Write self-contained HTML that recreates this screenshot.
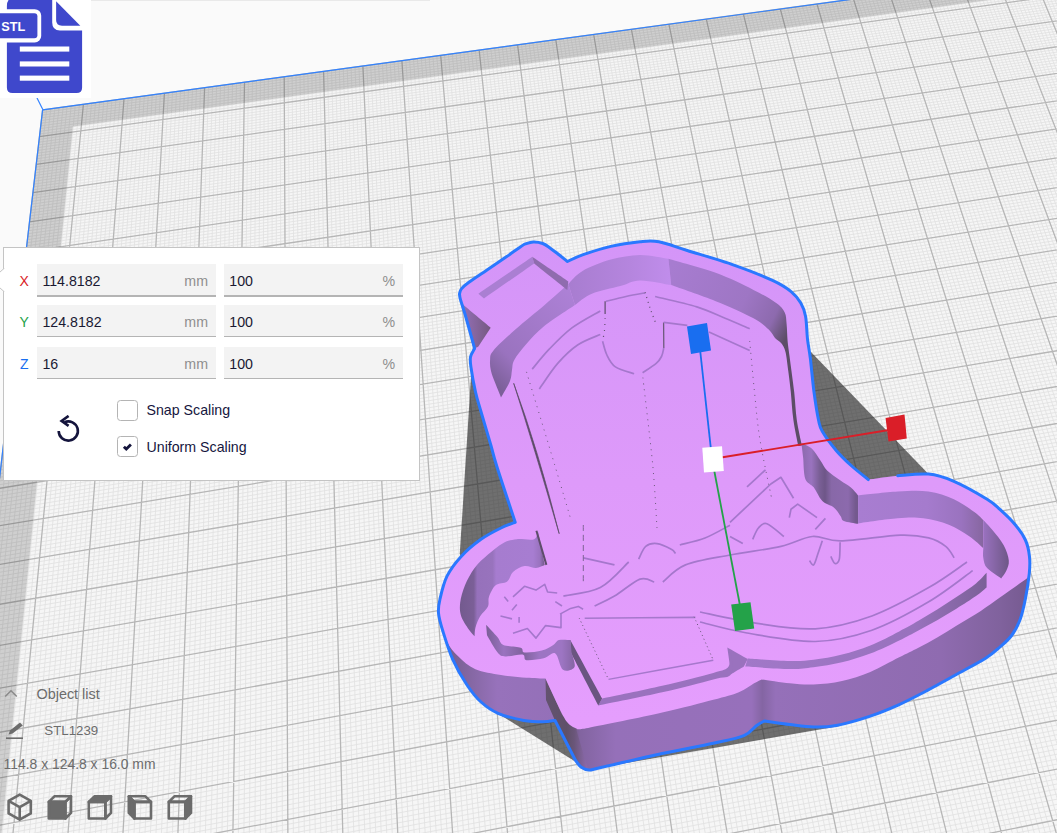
<!DOCTYPE html>
<html><head><meta charset="utf-8"><title>STL1239</title>
<style>
html,body{margin:0;padding:0}
body{width:1057px;height:833px;position:relative;overflow:hidden;background:#fafafa;font-family:"Liberation Sans","DejaVu Sans",sans-serif}
.abs{position:absolute}
#topline{left:91px;top:0;width:339px;height:1px;background:#e9e9e9}
#iconbox{left:0;top:0;width:91px;height:98px;background:#fff;overflow:hidden}
#panel{left:3px;top:247px;width:415px;height:232px;background:#fff;border:1px solid #c4c4c4;}
.lbl{position:absolute;left:13.2px;width:14px;text-align:center;font-size:14px;line-height:16px}
.fld{position:absolute;height:30.6px;background:#f3f3f3;border-bottom:2.3px solid #b4b4b4;font-size:14.2px;color:#191932;box-sizing:content-box}
.fld span.v{position:absolute;left:5.4px;top:8.6px;line-height:16px}
.fld span.u{position:absolute;right:8px;top:8.6px;line-height:16px;color:#8e8e8e}
.cb{position:absolute;left:113px;width:19px;height:19px;border:1px solid #b4b4b4;border-radius:3.5px;background:#fff}
.cbl{position:absolute;left:142.5px;font-size:14.2px;color:#16163e;line-height:18px;white-space:nowrap}
.gtxt{color:#6c6c6c;white-space:nowrap}

</style></head><body>
<svg width="1057" height="833" viewBox="0 0 1057 833" style="position:absolute;left:0;top:0">
<polygon points="42.6,109.8 1242.3,-54.1 1863.7,1115.4 -130.5,1590.5" fill="#f6f6f6"/>
<path d="M46.7 109.3L-74.4 1163.9M42.3 112.5L1104.6 -32.9M50.8 108.7L-68.1 1162.6M42 115.1L1105.6 -30.6M54.9 108.2L-61.8 1161.3M41.7 117.8L1106.6 -28.3M59 107.6L-55.5 1159.9M41.4 120.5L1107.6 -26M63.1 107L-49.2 1158.6M41 123.2L1108.7 -23.7M67.1 106.5L-42.9 1157.3M40.7 125.9L1109.7 -21.4M71.2 105.9L-36.6 1156M40.4 128.6L1110.8 -19.1M75.3 105.4L-30.3 1154.7M40.1 131.3L1111.8 -16.8M79.4 104.8L-24 1153.4M39.8 134L1112.9 -14.5M87.5 103.7L-11.5 1150.7M39.1 139.4L1115 -9.8M91.6 103.1L-5.2 1149.4M38.8 142.2L1116 -7.5M95.6 102.6L1 1148.1M38.5 144.9L1117.1 -5.1M99.7 102L7.3 1146.8M38.2 147.6L1118.1 -2.8M103.8 101.5L13.5 1145.5M37.9 150.4L1119.2 -0.4M107.8 100.9L19.8 1144.2M37.5 153.2L1120.2 1.9M111.9 100.4L26 1142.9M37.2 155.9L1121.3 4.3M115.9 99.8L32.2 1141.6M36.9 158.7L1122.4 6.7M120 99.3L38.5 1140.3M36.6 161.5L1123.5 9.1M128.1 98.2L50.9 1137.7M35.9 167.1L1125.6 13.8M132.1 97.6L57.1 1136.4M35.6 169.9L1126.7 16.2M136.2 97L63.3 1135.1M35.3 172.7L1127.8 18.6M140.2 96.5L69.5 1133.8M34.9 175.5L1128.9 21.1M144.3 95.9L75.7 1132.5M34.6 178.4L1129.9 23.5M148.3 95.4L81.9 1131.2M34.3 181.2L1131 25.9M152.3 94.8L88.1 1129.9M33.9 184.1L1132.1 28.3M156.4 94.3L94.2 1128.6M33.6 186.9L1133.2 30.8M160.4 93.7L100.4 1127.3M33.3 189.8L1134.3 33.2M168.4 92.6L112.7 1124.7M32.6 195.5L1136.5 38.1M172.5 92.1L118.9 1123.4M32.2 198.4L1137.6 40.6M176.5 91.5L125 1122.2M31.9 201.3L1138.8 43M180.5 91L131.2 1120.9M31.6 204.2L1139.9 45.5M184.5 90.4L137.3 1119.6M31.2 207.1L1141 48M188.5 89.9L143.5 1118.3M30.9 210.1L1142.1 50.5M192.5 89.3L149.6 1117M30.5 213L1143.2 53M196.5 88.8L155.7 1115.7M30.2 215.9L1144.4 55.5M200.6 88.2L161.8 1114.5M29.9 218.9L1145.5 58M208.6 87.2L174.1 1111.9M29.2 224.8L1147.8 63M212.6 86.6L180.2 1110.6M28.8 227.8L1148.9 65.5M216.6 86.1L186.3 1109.3M28.5 230.7L1150 68M220.5 85.5L192.3 1108.1M28.1 233.7L1151.2 70.6M224.5 85L198.4 1106.8M27.8 236.7L1152.3 73.1M228.5 84.4L204.5 1105.5M27.4 239.7L1153.5 75.7M232.5 83.9L210.6 1104.2M27.1 242.7L1154.6 78.2M236.5 83.3L216.7 1103M26.7 245.8L1155.8 80.8M240.5 82.8L222.7 1101.7M26.4 248.8L1156.9 83.4M248.4 81.7L234.8 1099.2M25.6 254.9L1159.3 88.5M252.4 81.2L240.9 1097.9M25.3 257.9L1160.4 91.1M256.4 80.6L246.9 1096.6M24.9 261L1161.6 93.7M260.4 80.1L253 1095.4M24.6 264.1L1162.8 96.3M264.3 79.5L259 1094.1M24.2 267.1L1163.9 98.9M268.3 79L265 1092.8M23.9 270.2L1165.1 101.6M272.3 78.4L271.1 1091.6M23.5 273.3L1166.3 104.2M276.2 77.9L277.1 1090.3M23.1 276.4L1167.5 106.8M280.2 77.4L283.1 1089.1M22.8 279.6L1168.7 109.5M288.1 76.3L295.1 1086.6M22 285.8L1171.1 114.8M292.1 75.7L301.1 1085.3M21.7 289L1172.3 117.4M296 75.2L307.1 1084M21.3 292.1L1173.5 120.1M300 74.7L313.1 1082.8M20.9 295.3L1174.7 122.8M303.9 74.1L319 1081.5M20.6 298.5L1175.9 125.5M307.9 73.6L325 1080.3M20.2 301.6L1177.1 128.1M311.8 73L331 1079M19.8 304.8L1178.3 130.8M315.7 72.5L337 1077.8M19.4 308L1179.5 133.6M319.7 72L342.9 1076.5M19.1 311.2L1180.8 136.3M327.5 70.9L354.8 1074.1M18.3 317.7L1183.2 141.7M331.5 70.4L360.8 1072.8M17.9 320.9L1184.4 144.4M335.4 69.8L366.7 1071.6M17.5 324.2L1185.7 147.2M339.3 69.3L372.7 1070.3M17.2 327.4L1186.9 149.9M343.3 68.7L378.6 1069.1M16.8 330.7L1188.2 152.7M347.2 68.2L384.5 1067.8M16.4 334L1189.4 155.5M351.1 67.7L390.4 1066.6M16 337.3L1190.7 158.2M355 67.1L396.3 1065.4M15.6 340.6L1191.9 161M358.9 66.6L402.3 1064.1M15.2 343.9L1193.2 163.8M366.8 65.5L414.1 1061.7M14.5 350.5L1195.7 169.4M370.7 65L420 1060.4M14.1 353.9L1197 172.2M374.6 64.5L425.8 1059.2M13.7 357.2L1198.2 175M378.5 63.9L431.7 1058M13.3 360.6L1199.5 177.8M382.4 63.4L437.6 1056.7M12.9 363.9L1200.8 180.7M386.3 62.9L443.5 1055.5M12.5 367.3L1202 183.5M390.2 62.3L449.4 1054.3M12.1 370.7L1203.3 186.4M394.1 61.8L455.2 1053M11.7 374.1L1204.6 189.2M398 61.3L461.1 1051.8M11.3 377.5L1205.9 192.1M405.8 60.2L472.8 1049.4M10.5 384.3L1208.5 197.8M409.6 59.7L478.6 1048.1M10.1 387.8L1209.8 200.7M413.5 59.1L484.5 1046.9M9.7 391.2L1211.1 203.6M417.4 58.6L490.3 1045.7M9.3 394.7L1212.4 206.5M421.3 58.1L496.1 1044.5M8.9 398.2L1213.7 209.4M425.2 57.6L502 1043.3M8.5 401.6L1215 212.4M429.1 57L507.8 1042M8.1 405.1L1216.4 215.3M432.9 56.5L513.6 1040.8M7.7 408.6L1217.7 218.2M436.8 56L519.4 1039.6M7.3 412.2L1219 221.2M444.5 54.9L531 1037.2M6.4 419.2L1221.7 227.1M448.4 54.4L536.8 1036M6 422.8L1223 230.1M452.3 53.8L542.6 1034.7M5.6 426.3L1224.4 233M456.1 53.3L548.4 1033.5M5.2 429.9L1225.7 236M460 52.8L554.2 1032.3M4.8 433.5L1227.1 239M463.8 52.3L559.9 1031.1M4.3 437.1L1228.4 242M467.7 51.7L565.7 1029.9M3.9 440.7L1229.8 245M471.5 51.2L571.5 1028.7M3.5 444.3L1231.1 248.1M475.4 50.7L577.2 1027.5M3.1 447.9L1232.5 251.1M483.1 49.6L588.7 1025.1M2.2 455.2L1235.2 257.2M486.9 49.1L594.5 1023.9M1.8 458.8L1236.6 260.2M490.8 48.6L600.2 1022.7M1.4 462.5L1238 263.3M494.6 48.1L606 1021.5M0.9 466.2L1239.4 266.4M498.5 47.5L611.7 1020.3M0.5 469.9L1240.8 269.5M502.3 47L617.4 1019.1M0.1 473.6L1242.2 272.6M506.1 46.5L623.2 1017.9M-0.4 477.3L1243.6 275.7M510 46L628.9 1016.7M-0.8 481L1245 278.8M513.8 45.4L634.6 1015.5M-1.2 484.8L1246.4 281.9M521.4 44.4L646 1013.1M-2.1 492.3L1249.2 288.1M525.3 43.9L651.7 1011.9M-2.5 496.1L1250.6 291.3M529.1 43.4L657.4 1010.7M-3 499.8L1252 294.5M532.9 42.8L663.1 1009.5M-3.4 503.6L1253.5 297.6M536.7 42.3L668.8 1008.3M-3.9 507.5L1254.9 300.8M540.5 41.8L674.4 1007.1M-4.3 511.3L1256.3 304M544.3 41.3L680.1 1006M-4.8 515.1L1257.8 307.2M548.1 40.7L685.8 1004.8M-5.2 519L1259.2 310.4M552 40.2L691.4 1003.6M-5.7 522.8L1260.6 313.6M559.6 39.2L702.8 1001.2M-6.6 530.6L1263.5 320M563.4 38.7L708.4 1000M-7 534.5L1265 323.3M567.2 38.1L714.1 998.9M-7.5 538.4L1266.5 326.5M571 37.6L719.7 997.7M-8 542.3L1267.9 329.8M574.8 37.1L725.3 996.5M-8.4 546.3L1269.4 333M578.5 36.6L731 995.3M-8.9 550.2L1270.9 336.3M582.3 36.1L736.6 994.1M-9.3 554.2L1272.4 339.6M586.1 35.6L742.2 993M-9.8 558.2L1273.9 342.9M589.9 35L747.8 991.8M-10.3 562.1L1275.3 346.2M597.5 34L759.1 989.4M-11.2 570.2L1278.3 352.9M601.3 33.5L764.7 988.3M-11.7 574.2L1279.8 356.2M605 33L770.3 987.1M-12.2 578.2L1281.4 359.5M608.8 32.5L775.9 985.9M-12.6 582.3L1282.9 362.9M612.6 31.9L781.5 984.7M-13.1 586.4L1284.4 366.3M616.4 31.4L787 983.6M-13.6 590.4L1285.9 369.6M620.1 30.9L792.6 982.4M-14.1 594.5L1287.4 373M623.9 30.4L798.2 981.2M-14.5 598.6L1289 376.4M627.7 29.9L803.8 980.1M-15 602.8L1290.5 379.8M635.2 28.9L814.9 977.7M-16 611.1L1293.6 386.7M638.9 28.3L820.5 976.6M-16.5 615.2L1295.1 390.1M642.7 27.8L826 975.4M-17 619.4L1296.7 393.6M646.5 27.3L831.6 974.3M-17.5 623.6L1298.2 397M650.2 26.8L837.1 973.1M-17.9 627.8L1299.8 400.5M654 26.3L842.6 971.9M-18.4 632L1301.4 404M657.7 25.8L848.2 970.8M-18.9 636.2L1302.9 407.5M661.5 25.3L853.7 969.6M-19.4 640.5L1304.5 411M665.2 24.7L859.2 968.5M-19.9 644.8L1306.1 414.5M672.7 23.7L870.3 966.2M-20.9 653.3L1309.3 421.6M676.4 23.2L875.8 965M-21.4 657.6L1310.9 425.1M680.2 22.7L881.3 963.9M-21.9 662L1312.5 428.7M683.9 22.2L886.8 962.7M-22.4 666.3L1314.1 432.2M687.6 21.7L892.3 961.5M-23 670.7L1315.7 435.8M691.4 21.2L897.8 960.4M-23.5 675L1317.3 439.4M695.1 20.7L903.3 959.3M-24 679.4L1319 443M698.8 20.2L908.7 958.1M-24.5 683.8L1320.6 446.6M702.5 19.6L914.2 957M-25 688.2L1322.2 450.2M710 18.6L925.2 954.7M-26 697.1L1325.5 457.5M713.7 18.1L930.6 953.5M-26.6 701.5L1327.1 461.2M717.4 17.6L936.1 952.4M-27.1 706L1328.8 464.8M721.1 17.1L941.6 951.2M-27.6 710.5L1330.5 468.5M724.8 16.6L947 950.1M-28.1 715L1332.1 472.2M728.6 16.1L952.5 949M-28.7 719.5L1333.8 475.9M732.3 15.6L957.9 947.8M-29.2 724.1L1335.5 479.6M736 15.1L963.3 946.7M-29.7 728.6L1337.1 483.4M739.7 14.6L968.8 945.5M-30.3 733.2L1338.8 487.1M747.1 13.6L979.6 943.3M-31.3 742.4L1342.2 494.6M750.8 13.1L985.1 942.1M-31.9 747L1343.9 498.4M754.5 12.6L990.5 941M-32.4 751.6L1345.6 502.2M758.2 12L995.9 939.9M-33 756.3L1347.3 506M761.8 11.5L1001.3 938.7M-33.5 760.9L1349 509.8M765.5 11L1006.7 937.6M-34.1 765.6L1350.8 513.6M769.2 10.5L1012.1 936.5M-34.6 770.3L1352.5 517.5M772.9 10L1017.5 935.3M-35.2 775L1354.2 521.3M776.6 9.5L1022.9 934.2M-35.7 779.8L1356 525.2M784 8.5L1033.7 932M-36.8 789.3L1359.5 532.9M787.6 8L1039 930.8M-37.4 794.1L1361.2 536.8M791.3 7.5L1044.4 929.7M-37.9 798.9L1363 540.7M795 7L1049.8 928.6M-38.5 803.7L1364.8 544.7M798.7 6.5L1055.1 927.5M-39.1 808.5L1366.5 548.6M802.3 6L1060.5 926.3M-39.6 813.4L1368.3 552.6M806 5.5L1065.9 925.2M-40.2 818.2L1370.1 556.5M809.7 5L1071.2 924.1M-40.8 823.1L1371.9 560.5M813.3 4.5L1076.6 923M-41.4 828L1373.7 564.5M820.6 3.5L1087.2 920.7M-42.5 837.9L1377.3 572.5M824.3 3L1092.6 919.6M-43.1 842.9L1379.1 576.5M827.9 2.5L1097.9 918.5M-43.7 847.8L1380.9 580.6M831.6 2L1103.2 917.4M-44.3 852.8L1382.8 584.6M835.3 1.5L1108.5 916.3M-44.8 857.8L1384.6 588.7M838.9 1L1113.9 915.2M-45.4 862.9L1386.4 592.8M842.5 0.5L1119.2 914.1M-46 867.9L1388.3 596.9M846.2 0L1124.5 912.9M-46.6 873L1390.1 601M849.8 -0.5L1129.8 911.8M-47.2 878.1L1392 605.1M857.1 -1.5L1140.4 909.6M-48.4 888.3L1395.7 613.4M860.8 -2L1145.7 908.5M-49 893.5L1397.6 617.6M864.4 -2.5L1151 907.4M-49.6 898.6L1399.5 621.7M868 -3L1156.2 906.3M-50.2 903.8L1401.4 625.9M871.7 -3.5L1161.5 905.2M-50.8 909L1403.3 630.1M875.3 -4L1166.8 904.1M-51.4 914.2L1405.2 634.3M878.9 -4.5L1172.1 903M-52 919.5L1407.1 638.6M882.5 -5L1177.3 901.9M-52.7 924.8L1409 642.8M886.2 -5.4L1182.6 900.8M-53.3 930L1410.9 647.1M893.4 -6.4L1193.1 898.6M-54.5 940.7L1414.8 655.7M897 -6.9L1198.3 897.5M-55.1 946L1416.7 660M900.6 -7.4L1203.6 896.4M-55.8 951.4L1418.6 664.3M904.3 -7.9L1208.8 895.3M-56.4 956.7L1420.6 668.6M907.9 -8.4L1214.1 894.2M-57 962.2L1422.6 673M911.5 -8.9L1219.3 893.1M-57.7 967.6L1424.5 677.3M915.1 -9.4L1224.5 892M-58.3 973L1426.5 681.7M918.7 -9.9L1229.7 890.9M-58.9 978.5L1428.5 686.1M922.3 -10.4L1235 889.8M-59.6 984L1430.5 690.5M929.5 -11.4L1245.4 887.6M-60.9 995L1434.5 699.4M933.1 -11.9L1250.6 886.5M-61.5 1000.6L1436.5 703.9M936.7 -12.4L1255.8 885.5M-62.2 1006.1L1438.5 708.3M940.3 -12.8L1261 884.4M-62.8 1011.7L1440.5 712.8M943.9 -13.3L1266.2 883.3M-63.5 1017.4L1442.5 717.3M947.5 -13.8L1271.4 882.2M-64.1 1023L1444.6 721.8M951.1 -14.3L1276.6 881.1M-64.8 1028.7L1446.6 726.4M954.6 -14.8L1281.7 880M-65.5 1034.3L1448.7 730.9M958.2 -15.3L1286.9 878.9M-66.1 1040L1450.7 735.5M965.4 -16.3L1297.3 876.8M-67.5 1051.5L1454.9 744.7M969 -16.8L1302.4 875.7M-68.2 1057.3L1456.9 749.3M972.5 -17.3L1307.6 874.6M-68.8 1063.1L1459 753.9M976.1 -17.7L1312.7 873.5M-69.5 1068.9L1461.1 758.6M979.7 -18.2L1317.9 872.5M-70.2 1074.7L1463.2 763.2M983.3 -18.7L1323 871.4M-70.9 1080.6L1465.3 767.9M986.8 -19.2L1328.2 870.3M-71.6 1086.5L1467.5 772.6M990.4 -19.7L1333.3 869.2M-72.3 1092.4L1469.6 777.3M994 -20.2L1338.5 868.2M-73 1098.3L1471.7 782.1M1001.1 -21.2L1348.7 866M-74.4 1110.3L1476 791.6M1004.6 -21.6L1353.8 864.9M-75.1 1116.3L1478.1 796.4M1008.2 -22.1L1359 863.9M-75.8 1122.3L1480.3 801.2M1011.8 -22.6L1364.1 862.8M-76.5 1128.4L1482.5 806M1015.3 -23.1L1369.2 861.7M-77.2 1134.5L1484.7 810.8M1018.9 -23.6L1374.3 860.7M-77.9 1140.6L1486.8 815.7M1022.4 -24.1L1379.4 859.6M-78.6 1146.7L1489 820.5M1026 -24.6L1384.5 858.5M-79.3 1152.9L1491.2 825.4M1029.5 -25L1389.6 857.4M-80 1159L1493.4 830.3M1036.6 -26L1399.8 855.3M1040.1 -26.5L1404.9 854.3M1043.7 -27L1409.9 853.2M1047.2 -27.5L1415 852.1M1050.7 -27.9L1420.1 851.1M1054.3 -28.4L1425.1 850M1057.8 -28.9L1430.2 848.9M1061.3 -29.4L1435.3 847.9" stroke="#e1e1e1" stroke-width="0.85" fill="none"/>
<path d="M42.6 109.8L-80.8 1165.2M42.6 109.8L1103.5 -35.2M83.4 104.3L-17.8 1152M39.5 136.7L1113.9 -12.1M124 98.7L44.7 1139M36.2 164.3L1124.5 11.4M164.4 93.2L106.6 1126M32.9 192.7L1135.4 35.6M204.6 87.7L167.9 1113.2M29.5 221.8L1146.6 60.5M244.5 82.2L228.8 1100.4M26 251.8L1158.1 86M284.2 76.8L289.1 1087.8M22.4 282.7L1169.9 112.1M323.6 71.4L348.9 1075.3M18.7 314.5L1182 139M362.9 66.1L408.2 1062.9M14.9 347.2L1194.4 166.6M401.9 60.7L466.9 1050.6M10.9 380.9L1207.2 195M440.7 55.4L525.2 1038.4M6.8 415.7L1220.3 224.1M479.2 50.2L583 1026.3M2.7 451.5L1233.9 254.1M517.6 44.9L640.3 1014.3M-1.7 488.5L1247.8 285M555.8 39.7L697.1 1002.4M-6.1 526.7L1262.1 316.8M593.7 34.5L753.5 990.6M-10.7 566.1L1276.8 349.5M631.4 29.4L809.3 978.9M-15.5 606.9L1292 383.3M668.9 24.2L864.7 967.3M-20.4 649L1307.7 418M706.3 19.1L919.7 955.8M-25.5 692.6L1323.8 453.9M743.4 14.1L974.2 944.4M-30.8 737.8L1340.5 490.9M780.3 9L1028.3 933.1M-36.3 784.5L1357.7 529M817 4L1081.9 921.9M-41.9 833L1375.5 568.5M853.5 -1L1135.1 910.7M-47.8 883.2L1393.8 609.2M889.8 -5.9L1187.8 899.7M-53.9 935.3L1412.8 651.4M925.9 -10.9L1240.2 888.7M-60.2 989.5L1432.5 695M961.8 -15.8L1292.1 877.9M-66.8 1045.8L1452.8 740.1M997.5 -20.7L1343.6 867.1M-73.7 1104.3L1473.8 786.8M1033 -25.5L1394.7 856.4M-80.8 1165.2L1495.7 835.2" stroke="#b6b6b6" stroke-width="1.3" fill="none"/>
<path d="M42.6 109.8L1242.3 -54.1L1863.7 1115.4L-130.5 1590.5 Z M72.8 126.5L-67.3 1514.7L1797 1078.5L1224.3 -32.6 Z" fill="#000" fill-opacity="0.157" fill-rule="evenodd"/>
<polygon points="42.6,109.8 1242.3,-54.1 1863.7,1115.4 -130.5,1590.5" fill="none" stroke="#3282ff" stroke-width="1.2"/>
<path d="M42.7 109.3L37 98" stroke="#3282ff" stroke-width="1.2" fill="none"/>
<defs>
<linearGradient id="gw" x1="438" y1="0" x2="1030" y2="0" gradientUnits="userSpaceOnUse"><stop offset="0" stop-color="#6f5a86"/><stop offset="0.1" stop-color="#9772bb"/><stop offset="0.2" stop-color="#9470b8"/><stop offset="0.215" stop-color="#5f5069"/><stop offset="0.24" stop-color="#8264a0"/><stop offset="0.3" stop-color="#9570b9"/><stop offset="0.53" stop-color="#9770bb"/><stop offset="0.548" stop-color="#8465a3"/><stop offset="0.57" stop-color="#9570b9"/><stop offset="0.85" stop-color="#8f6bb0"/><stop offset="0.95" stop-color="#80629d"/><stop offset="1" stop-color="#75598f"/></linearGradient>
<linearGradient id="gbl" x1="490" y1="380" x2="575" y2="295" gradientUnits="userSpaceOnUse"><stop offset="0" stop-color="#7b5f98"/><stop offset="0.25" stop-color="#9a73bf"/><stop offset="1" stop-color="#ad81d6"/></linearGradient>
<linearGradient id="gb1" x1="570" y1="0" x2="670" y2="0" gradientUnits="userSpaceOnUse"><stop offset="0" stop-color="#a87dd0"/><stop offset="0.6" stop-color="#b585de"/><stop offset="1" stop-color="#c08deb"/></linearGradient>
<linearGradient id="gb2" x1="670" y1="270" x2="790" y2="330" gradientUnits="userSpaceOnUse"><stop offset="0" stop-color="#a77cd0"/><stop offset="0.6" stop-color="#9e76c4"/><stop offset="0.85" stop-color="#8d6aae"/><stop offset="1" stop-color="#5c4d66"/></linearGradient>
<linearGradient id="gank" x1="803" y1="0" x2="858" y2="0" gradientUnits="userSpaceOnUse"><stop offset="0" stop-color="#8e6bb0"/><stop offset="0.15" stop-color="#9a73bf"/><stop offset="0.3" stop-color="#7a5f96"/><stop offset="0.4" stop-color="#6e5688"/><stop offset="0.52" stop-color="#8868a8"/><stop offset="0.82" stop-color="#8c6aad"/><stop offset="0.96" stop-color="#73598d"/></linearGradient>
<linearGradient id="gspur" x1="486" y1="0" x2="575" y2="0" gradientUnits="userSpaceOnUse"><stop offset="0" stop-color="#7a5f96"/><stop offset="0.2" stop-color="#9a73bf"/><stop offset="0.42" stop-color="#7f629c"/><stop offset="0.6" stop-color="#9d75c3"/><stop offset="0.85" stop-color="#9d75c3"/><stop offset="1" stop-color="#8465a2"/></linearGradient>
<linearGradient id="gtoe" x1="858" y1="0" x2="984" y2="0" gradientUnits="userSpaceOnUse"><stop offset="0" stop-color="#a87dd1"/><stop offset="0.55" stop-color="#a57bcd"/><stop offset="0.82" stop-color="#9a73bf"/><stop offset="1" stop-color="#86669f"/></linearGradient>
<linearGradient id="gtoe2" x1="983" y1="0" x2="1009" y2="0" gradientUnits="userSpaceOnUse"><stop offset="0" stop-color="#9a72c0"/><stop offset="1" stop-color="#6e5786"/></linearGradient>
<linearGradient id="gsole" x1="745" y1="0" x2="987" y2="0" gradientUnits="userSpaceOnUse"><stop offset="0" stop-color="#a178c8"/><stop offset="0.7" stop-color="#9872bd"/><stop offset="1" stop-color="#7b6097"/></linearGradient>
<linearGradient id="gheel" x1="460" y1="0" x2="546" y2="0" gradientUnits="userSpaceOnUse"><stop offset="0" stop-color="#735a8e"/><stop offset="0.16" stop-color="#7b5f97"/><stop offset="0.2" stop-color="#9671bb"/><stop offset="0.38" stop-color="#9873bd"/><stop offset="0.42" stop-color="#a67ccf"/><stop offset="0.85" stop-color="#a77dd1"/><stop offset="0.93" stop-color="#9a73bf"/><stop offset="1" stop-color="#665278"/></linearGradient>
<linearGradient id="gloop" x1="462" y1="0" x2="491" y2="0" gradientUnits="userSpaceOnUse"><stop offset="0" stop-color="#9570b8"/><stop offset="1" stop-color="#75597f"/></linearGradient>
<linearGradient id="gtop" x1="0" y1="245" x2="0" y2="720" gradientUnits="userSpaceOnUse"><stop offset="0" stop-color="#d495f8"/><stop offset="0.5" stop-color="#de9afa"/><stop offset="1" stop-color="#e59efd"/></linearGradient>
<linearGradient id="gdk" x1="545" y1="0" x2="588" y2="0" gradientUnits="userSpaceOnUse"><stop offset="0" stop-color="#64536f"/><stop offset="0.5" stop-color="#5f5069"/><stop offset="0.68" stop-color="#6a5679"/><stop offset="1" stop-color="#8e6baf"/></linearGradient>
</defs>
<polygon points="473,345 811,352 940,486 1000,600 840,726 589,769.5 577.6,763 495.3,711.9 459.8,553.5" fill="#232323" fill-opacity="0.64"/>
<path d="M459.5 294C459.8 293.1 459.8 290.8 461.4 288.9C463 286.9 464.6 285.4 468.9 282.3C473.2 279.2 480.8 274.2 487 270C493.2 265.8 500.3 260.9 506 257C511.7 253.1 517.7 248.7 521 246.5C524.3 244.3 523.7 244.6 525.7 243.8C527.8 243.1 530.5 242.1 533.3 242C536.1 241.9 539.9 242.5 542.7 243.5C545.5 244.5 547.6 246.3 550.3 248.2C553 250.1 556.1 252.6 559 254.8C561.9 257 566.1 260.4 567.5 261.5L567.5 261.5C570 260.4 575.3 257.4 582.5 254.9C589.7 252.4 601.2 248.6 610.8 246.4C620.4 244.2 632 242.6 640 241.8C648 241 651 240.4 658.9 241.8C666.8 243.2 674.7 246.6 687.3 250.5C699.9 254.4 720.4 260.3 734.6 265.3C748.8 270.3 763 276 772.5 280.4C782 284.8 786.7 288 791.4 291.8C796.1 295.6 798.4 299 800.8 303.1C803.2 307.2 804.5 310.4 805.6 316.4C806.7 322.4 806.7 332.1 807.5 339C808.3 345.9 809.2 349.2 810.3 358C811.4 366.8 812.6 381.7 814 392C815.4 402.3 817.1 413.4 818.5 420C819.9 426.6 819.4 426.4 822.4 431.5C825.4 436.6 831.5 444.9 836.4 450.7C841.3 456.4 846.4 461.2 851.7 466C857 470.8 865.5 477.3 868.3 479.6L868.3 479.6C873.2 479 887.7 476.6 897.7 475.7C907.7 474.8 919 473.2 928.4 474.1C937.8 475 944.1 477.1 953.9 481.3C963.7 485.5 979.4 494.5 987.1 499.2C994.8 503.9 995.2 505.1 999.9 509.4C1004.6 513.6 1011 519.6 1015.2 524.7C1019.5 529.8 1023 534.8 1025.4 540C1027.8 545.2 1028.8 550.5 1029.4 556C1030.1 561.5 1030 566.2 1029.3 573.3C1028.6 580.4 1026.9 591.2 1025.4 598.8C1023.9 606.4 1022.5 613 1020.3 619C1018.1 625 1015.4 630.3 1012 635C1008.6 639.7 1004.4 643.1 1000 647C995.6 650.9 993 653.6 985.6 658.3C978.2 663 965.3 669.6 955.5 675C945.7 680.4 936.5 685.6 927 690.6C917.5 695.6 908.2 700.5 898.7 704.8C889.2 709 880.7 712.6 870.3 716.1C859.9 719.6 845.7 723.7 836.2 725.5C826.7 727.3 821.2 727.1 813.5 727C805.8 726.9 798.1 725.6 789.9 724.6C781.7 723.6 768.6 721.6 764.3 721L764.3 721C763 721.7 760.1 723 756.7 725.4C753.3 727.8 751.1 732.6 743.9 735.6C736.7 738.6 726.9 740.3 713.3 743.3C699.7 746.3 680.9 749.5 662.2 753.5C643.5 757.5 613.1 764.8 600.9 767.5C588.7 770.2 592.3 770.1 589 770C585.7 769.9 583.3 768.7 581 767C578.7 765.3 576.2 761.2 575.3 760L575.3 760C571.9 753.4 558.4 727.1 555 720.5L555 720.5C553.1 720.7 548.7 721.8 543.5 721.8C538.3 721.8 531.3 721.8 523.7 720.4C516.1 719 505.1 716.4 498 713.3C490.9 710.2 486.2 706.7 481 702C475.8 697.3 471.7 692.1 467 685C462.3 677.9 456.7 668.3 452.7 659.3C448.7 650.3 445.2 638.7 442.8 631C440.4 623.3 439 618.4 438.5 613.1C438 607.8 438.6 605.1 440 599C441.4 592.9 443.5 583.3 447 576.2C450.5 569.1 455.5 562.5 461.2 556.4C466.9 550.2 474.4 544 481 539.3C487.6 534.6 495.3 530.8 501 528C506.7 525.2 512.8 523.2 515.2 522.3L515.2 522.3C512.1 512.9 500.7 478.8 496.7 466C492.7 453.2 493.6 454.8 491 445.7C488.4 436.6 483.6 420.6 481 411.7C478.4 402.8 477.2 399.4 475.5 392C473.8 384.6 471.8 373.3 471 367.5C470.2 361.7 469.9 360.2 470.5 357C471.1 353.8 473.9 349.9 474.6 348.5L474.6 348.5C473 342.8 467.5 322.7 465.1 314.5C462.7 306.3 461.3 302.7 460.4 299.3C459.5 295.9 459.6 294.9 459.5 294Z" fill="url(#gw)"/>
<polygon points="545.5,678.6 562,714 569,724.5 576,728.5 588,769.5 581,767 575.3,760 555,720.5 546,700" fill="url(#gdk)"/>
<path d="M438.5 613.1C438.8 610.8 438.6 605.1 440 599C441.4 592.9 443.5 583.3 447 576.2C450.5 569.1 455.5 562.5 461.2 556.4C466.9 550.2 474.4 544 481 539.3C487.6 534.6 495.3 530.8 501 528C506.7 525.2 512.8 523.2 515.2 522.3L515.2 522.3C512.1 512.9 500.7 478.8 496.7 466C492.7 453.2 493.6 454.8 491 445.7C488.4 436.6 483.6 420.6 481 411.7C478.4 402.8 477.2 399.4 475.5 392C473.8 384.6 471.8 373.3 471 367.5C470.2 361.7 469.9 360.2 470.5 357C471.1 353.8 473.9 349.9 474.6 348.5L474.6 348.5C473 342.8 467.5 322.7 465.1 314.5C462.7 306.3 461.3 302.7 460.4 299.3C459.5 295.9 459.6 294.9 459.5 294L459.5 294C459.8 293.1 459.8 290.8 461.4 288.9C463 286.9 464.6 285.4 468.9 282.3C473.2 279.2 480.8 274.2 487 270C493.2 265.8 500.3 260.9 506 257C511.7 253.1 517.7 248.7 521 246.5C524.3 244.3 523.7 244.6 525.7 243.8C527.8 243.1 530.5 242.1 533.3 242C536.1 241.9 539.9 242.5 542.7 243.5C545.5 244.5 547.6 246.3 550.3 248.2C553 250.1 556.1 252.6 559 254.8C561.9 257 566.1 260.4 567.5 261.5L567.5 261.5C570 260.4 575.3 257.4 582.5 254.9C589.7 252.4 601.2 248.6 610.8 246.4C620.4 244.2 632 242.6 640 241.8C648 241 651 240.4 658.9 241.8C666.8 243.2 674.7 246.6 687.3 250.5C699.9 254.4 720.4 260.3 734.6 265.3C748.8 270.3 763 276 772.5 280.4C782 284.8 786.7 288 791.4 291.8C796.1 295.6 798.4 299 800.8 303.1C803.2 307.2 804.5 310.4 805.6 316.4C806.7 322.4 806.7 332.1 807.5 339C808.3 345.9 809.2 349.2 810.3 358C811.4 366.8 812.6 381.7 814 392C815.4 402.3 817.1 413.4 818.5 420C819.9 426.6 819.4 426.4 822.4 431.5C825.4 436.6 831.5 444.9 836.4 450.7C841.3 456.4 846.4 461.2 851.7 466C857 470.8 865.5 477.3 868.3 479.6L868.3 479.6C873.2 479 887.7 476.6 897.7 475.7C907.7 474.8 919 473.2 928.4 474.1C937.8 475 944.1 477.1 953.9 481.3C963.7 485.5 979.4 494.5 987.1 499.2C994.8 503.9 995.2 505.1 999.9 509.4C1004.6 513.6 1011 519.6 1015.2 524.7C1019.5 529.8 1023 534.8 1025.4 540C1027.8 545.2 1028.8 550.5 1029.4 556C1030.1 561.5 1029.3 570.4 1029.3 573.3L1029.3 573.3C1029.1 574 1030.4 575.3 1027.9 577.6C1025.4 579.9 1019.9 583.4 1014.5 587.2C1009.1 591.1 1001.7 596.2 995.3 600.7C988.9 605.2 982.4 610 976 614.1C969.6 618.2 963.2 621.8 956.8 625.6C950.4 629.5 944 633.5 937.6 637.2C931.2 640.9 924.8 644.4 918.4 647.7C912 651.1 907.2 653.2 899.2 657.3C891.2 661.3 879.8 668 870.3 672C860.8 676 851.5 678.9 842 681C832.5 683.1 822.2 684.1 813.5 684.5C804.8 684.9 798.5 684.1 789.9 683.2C781.3 682.4 766.5 680 761.8 679.4L761.8 679.4C760.5 680 757.9 681.1 754.1 683.2C750.3 685.3 745.6 689.4 738.8 692.2C732 695 726.1 696.4 713.3 699.8C700.5 703.2 683.1 707.9 662.2 712.6C641.3 717.3 602.6 725.4 588.1 727.9C573.6 730.4 578.7 728.8 575.3 727.9C571.9 727 569.9 725.1 567.7 722.8C565.5 720.5 563 715.5 562 714L562 714C559.2 708.1 548.2 684.5 545.5 678.6L545.5 678.6C542.3 678.5 533.9 678.4 526.5 677.8C519.1 677.2 509.5 676.4 501 675C492.5 673.6 482.5 672.4 475.4 669.3C468.3 666.2 463.1 661 458.4 656.5C453.7 652 449.9 647.8 447 642C444.1 636.2 442.4 626.8 441 622C439.6 617.2 438.9 614.6 438.5 613.1Z" fill="url(#gtop)"/>
<path d="M501 397.5C500.1 395.1 497 387.7 495.3 383.3C493.6 378.9 491.9 374.9 491 371C490.1 367.1 489.7 363.3 490.1 359.9C490.5 356.5 489.3 355.4 493.5 350.4C497.7 345.3 506.8 337.2 515.3 329.6C523.8 322 535.8 312.6 544.6 305C553.4 297.4 564.3 287.5 568.3 284L574.9 305C569.9 308.5 552.8 319.2 544.6 325.8C536.4 332.4 530.8 339 525.7 344.7C520.7 350.4 516.6 355.7 514.3 359.9C512 364.1 512.7 366.5 512 370C511.3 373.5 511.8 376.4 510 381C508.2 385.6 502.5 394.8 501 397.5Z" fill="url(#gbl)"/>
<path d="M568.3 284C570.7 281.8 575.4 275.1 582.5 271C589.6 266.9 601.2 262.3 610.8 259.6C620.4 256.9 630.4 255.1 640 254.9C649.6 254.8 663.7 258.1 668.4 258.7L671.2 285.1C666 284.3 648.5 280.2 640 280.4C631.5 280.6 628.3 283.9 620.3 286.1C612.3 288.3 599.5 290.6 591.9 293.7C584.3 296.8 577.7 303.1 574.9 305Z" fill="url(#gb1)"/>
<path d="M668.4 258.7C676.3 261.1 701.5 267.6 715.7 272.8C729.9 278 743.4 284.8 753.5 289.9C763.6 294.9 771 299.3 776.2 303.1C781.4 306.9 783 309.1 784.7 312.6C786.4 316.1 786.1 319.3 786.6 324C787.1 328.7 787.1 335.7 787.6 341C788.1 346.3 788.4 347.5 789.5 356C790.6 364.5 793 381.3 794.2 392C795.4 402.7 795.5 411.1 796.8 420C798.1 428.9 801 441.2 801.9 445.5L798.3 446C797.5 441.7 794.6 429 793.4 420C792.1 411 791.6 400.1 790.8 392C789.9 383.9 789.2 377.9 788.3 371.2C787.4 364.5 786.6 356.6 785.5 352C784.4 347.4 783.2 345.8 781.5 343.5C779.8 341.2 777.1 340.3 775 338C772.9 335.7 772.3 332.9 768.7 329.6C765.1 326.3 762.3 323 753.5 318.3C744.7 313.6 729.4 306.7 715.7 301.2C702 295.7 678.6 287.8 671.2 285.1Z" fill="url(#gb2)"/>
<path d="M801.5 444C801.7 443.9 801 442.9 802.8 443.7C804.5 444.5 809.1 445.9 812 448.7C814.9 451.5 817.9 456.9 820.4 460.5C822.9 464.1 823.8 467.1 827.1 470.5C830.5 473.9 836.6 477.8 840.5 480.6C844.4 483.4 847.7 484.8 850.6 487.3C853.5 489.8 856.9 494 858.1 495.4L858.1 523.8C855.7 523.3 846.8 522.2 843.9 520.9C841 519.6 842.2 518.1 840.5 515.9C838.8 513.7 836.9 510 833.8 507.5C830.7 505 825.5 504.2 822.1 500.8C818.8 497.4 816.5 491 813.7 487.3C810.9 483.6 807 483.7 805.3 478.9C803.5 474.1 803.6 461.7 803.2 458.3Z" fill="url(#gank)"/>
<path d="M858.1 495.4C864.7 494.8 886 492.1 897.7 491.5C909.4 490.9 919 490.2 928.4 491.5C937.8 492.8 946.2 495.8 953.9 499.2C961.5 502.6 969.4 508.5 974.3 512C979.2 515.5 981.8 518.7 983.3 520L983.3 548C980.9 546 975 540.1 969.2 536.2C963.5 532.3 956.4 527.7 948.8 524.7C941.1 521.7 931.8 519.4 923.3 518.3C914.8 517.2 908.6 517.4 897.7 518.3C886.8 519.1 864.7 522.5 858.1 523.4Z" fill="url(#gtoe)"/>
<path d="M983.3 520C984.8 521.6 988.8 525.6 992.2 529.8C995.6 534 1000.9 540.1 1003.7 545.2C1006.5 550.3 1008.4 556.2 1008.8 560.5C1009.2 564.8 1007.6 567.7 1006.3 570.7C1005 573.7 1002.1 577.1 1001.2 578.4L1001.2 578.4C998.9 576.7 990.1 571.5 987.1 568.1C984.1 564.7 983.9 561.2 983.3 557.9C982.7 554.5 983.3 549.6 983.3 548Z" fill="url(#gtoe2)"/>
<path d="M986.6 572.8C984.8 574.6 981 579.4 976 583.4C971 587.4 963.2 592.5 956.8 596.8C950.4 601.1 944 605.3 937.6 609.3C931.2 613.3 924.8 617.1 918.4 620.8C912 624.5 907.2 627.3 899.2 631.4C891.2 635.5 879.8 641.6 870.3 645.5C860.8 649.4 851.5 652.1 842 654.5C832.5 656.9 822.2 658.7 813.5 659.8C804.8 660.9 800.9 661.2 789.9 661C778.9 660.8 754.7 658.9 747.7 658.5L745.2 666.6C752.7 667 778.5 668.9 789.9 669C801.3 669.1 804.8 668.3 813.5 667.2C822.2 666.1 832.5 664.6 842 662.3C851.5 660 860.8 657.2 870.3 653.6C879.8 650 891.2 644.4 899.2 640.5C907.2 636.6 912 633.8 918.4 630.4C924.8 627 931.2 623.6 937.6 619.9C944 616.2 950.4 612.4 956.8 608.4C963.2 604.4 971 599.5 976 596C981 592.5 984.8 588.9 986.6 587.5Z" fill="url(#gsole)"/>
<path d="M727.3 647.5C730.7 649.4 744.3 657.1 747.7 659L743.9 666.6C741.8 667.9 733.2 673 731.1 674.3Z" fill="#9a72be"/>
<path d="M602.1 698.6C612.1 696.5 643.7 690.1 662.2 685.8C680.7 681.5 702.2 676.2 713.3 673C724.4 669.8 725.9 670.1 728.6 666.6C731.3 663.1 729.4 654.4 729.5 652L731.5 655C731.4 658.2 734.1 670.2 731.1 674.3C728.1 678.4 724.8 676.4 713.3 679.4C701.8 682.4 681.4 687.9 662.2 692.2C643 696.5 608.9 703.2 598.3 705.4Z" fill="#9a72be"/>
<path d="M570.2 639.8C575.5 649.6 596.8 688.8 602.1 698.6L598.3 705.4C593.8 696.7 575.5 661.7 571 653Z" fill="#6a5580"/>
<path d="M486.1 624.7C488 626.8 494.7 633.8 497.6 637.2C500.5 640.6 499.5 643.1 503.4 644.9C507.2 646.6 517.2 646.4 520.7 647.7C524.2 649 521 652 524.5 652.5C528 653 537 651.9 541.8 650.6C546.6 649.3 550.4 646.7 553.3 644.9C556.2 643.1 556.2 640.8 559.1 640C562 639.2 568.7 640 570.6 640L571.5 652C572 654.5 575.9 664 574.5 667C573.1 670 566.1 672 562.9 669.8C559.7 667.5 558.5 655.4 555.3 653.5C552.1 651.6 548.5 657.2 543.7 658.3C538.9 659.4 529.9 660.8 526.4 660.2C522.9 659.6 526.1 655.1 522.6 654.5C519.1 653.9 509.5 656.7 505.3 656.4C501.1 656.1 500.7 656 497.6 652.5C494.6 649 488.8 638.2 487 635.3Z" fill="url(#gspur)"/>
<path d="M537.9 530.8C537.3 532.2 537.6 537.8 534.1 539.2C530.6 540.6 521.9 538.6 516.8 539.2C511.7 539.8 508.2 540.4 503.4 543C498.6 545.6 492.8 550.4 488 554.6C483.2 558.8 478.4 562.9 474.6 568C470.8 573.1 467.4 579.5 465 585.3C462.6 591.1 460.8 597.5 460.2 602.6C459.6 607.7 459.7 611.5 461.1 616C462.5 620.5 466.6 626.1 468.8 629.5C471.1 632.9 473.6 635.1 474.6 636.2L474.6 636.2C474.8 634.8 474.6 631 475.5 627.6C476.4 624.2 478.2 619.5 480.3 616C482.4 612.5 486.6 609.6 488 606.4C489.4 603.2 487.7 600.3 489 596.8C490.3 593.3 492.7 587.8 495.7 585.3C498.7 582.8 504.3 583.7 507.2 581.5C510.1 579.3 510.1 574.5 513 571.9C515.9 569.3 520.7 566.8 524.5 566.1C528.3 565.5 532.6 568.2 536 568C539.4 567.8 543.2 565.6 544.7 565.1Z" fill="url(#gheel)"/>
<path d="M478.4 293.7C487.4 287.6 523.3 262.9 532.3 256.8L534.2 263.4C525.8 269.2 492.4 292.6 484 298.4Z" fill="#aa7fd2"/>
<path d="M532.3 256.8C538.3 260.9 562.3 277.3 568.3 281.4L567.3 289.9C561.8 285.5 539.7 267.8 534.2 263.4Z" fill="#8f6cae"/>
<path d="M462.3 304.1C467 308 486 323.8 490.7 327.7L478.4 346.6C477.8 346.9 475.2 348.2 474.6 348.5Z" fill="url(#gloop)"/>
<path d="M513.7 383.3Q535 450 559.2 533.7Q538.5 451 513.7 383.3Z" fill="#5a4a66" stroke="#5a4a66" stroke-width="0.7"/>
<path d="M536.4 530.8C538.1 536.5 544.7 559.2 546.4 564.9" fill="none" stroke="#5e4d6b" stroke-width="2"/>
<path d="M532.2 369.1C535 365.8 542.6 356.1 549.2 349.2C555.8 342.3 563.4 334.3 571.9 327.9C580.4 321.5 595.6 313.7 600.3 310.9" fill="none" stroke="#a577cc" stroke-width="1.7"/>
<path d="M539.3 389C542.4 384.7 551.3 370.7 557.7 363.4C564.1 356.1 570.5 349.8 577.6 345C584.7 340.2 596.5 336.2 600.3 334.5" fill="none" stroke="#a577cc" stroke-width="1.7"/>
<path d="M606 301.3C609.3 300.5 619.5 297.9 626 296.5C632.5 295.1 642 293.4 645.2 292.8" fill="none" stroke="#a577cc" stroke-width="1.7"/>
<path d="M605.1 301.3C605.1 303.4 605.1 311.9 605.1 314" fill="none" stroke="#5e4d6b" stroke-width="1.2"/>
<path d="M605.1 318C605 320 604.9 326.1 604.5 330C604.1 333.9 602.9 339.4 602.6 341.3" fill="none" stroke="#5e4d6b" stroke-width="1.2" stroke-dasharray="1 5"/>
<path d="M602.6 341.3C603.3 343.6 604.8 350.7 606.9 355C609 359.3 610.9 363.8 615.4 366.9C619.9 370 631 372.6 634.1 373.7" fill="none" stroke="#a577cc" stroke-width="1.7"/>
<path d="M645.2 292.3C646 294.9 648.2 302.7 650 308C651.8 313.3 655.2 321.6 656.2 324.3" fill="none" stroke="#5e4d6b" stroke-width="1.2" stroke-dasharray="1 4"/>
<path d="M663.6 322.6C663.6 326.8 663.8 343.8 663.8 348" fill="none" stroke="#6d5a7c" stroke-width="1.3"/>
<path d="M663.8 348C663.4 349.4 662.8 353.9 661.5 356.5C660.2 359.1 659.4 360.7 656.2 363.4C653.1 366.1 644.9 371.2 642.6 372.8" fill="none" stroke="#a577cc" stroke-width="1.7"/>
<path d="M655.1 296.5C662 298.2 685.1 303.3 696.8 306.9C708.5 310.5 716.3 314.7 725.1 318.3C733.9 321.9 745.6 327 749.7 328.7" fill="none" stroke="#a577cc" stroke-width="1.7"/>
<path d="M663.7 322.4C667.6 322.9 683.4 324.9 687.3 325.4" fill="none" stroke="#a577cc" stroke-width="1.7"/>
<path d="M709 331.9C715.8 335 742.9 347.3 749.7 350.4" fill="none" stroke="#a577cc" stroke-width="1.7"/>
<path d="M526.5 371.9C531.2 387.5 547.5 440.9 554.9 465.6C562.3 490.3 568.3 510.9 571 520" fill="none" stroke="#6d5a7c" stroke-width="1" stroke-dasharray="1 5"/>
<path d="M642.9 377.6C644.5 392.3 650.4 440.5 652.8 465.6C655.1 490.7 656.3 517.6 657 528" fill="none" stroke="#6d5a7c" stroke-width="1" stroke-dasharray="1 5"/>
<path d="M749.7 341C750.5 349.5 752.8 375.5 754.5 392C756.2 408.5 757.1 422 760 440C762.9 458 770 490 772 500" fill="none" stroke="#6d5a7c" stroke-width="1" stroke-dasharray="1 5"/>
<path d="M563.4 596.1C569.5 594.7 589.4 593.3 600.3 587.6C611.2 581.9 624 566.3 628.7 562" fill="none" stroke="#a577cc" stroke-width="1.7"/>
<path d="M594.6 606C597.9 604.4 606.9 600.6 614.5 596.1C622.1 591.6 633.4 581.5 640 579.1C646.6 576.8 651.8 581.5 654.2 582" fill="none" stroke="#a577cc" stroke-width="1.7"/>
<path d="M583.3 557.8C588.5 559 609.3 563.7 614.5 564.9" fill="none" stroke="#a577cc" stroke-width="1.7"/>
<path d="M583.3 525C583.3 534.5 583.3 572.5 583.3 582" fill="none" stroke="#7e6394" stroke-width="1" stroke-dasharray="6 4"/>
<path d="M638.6 559.2C639.8 557.1 642.6 549 645.7 546.4C648.8 543.8 652.7 543.1 657 543.6C661.3 544.1 668.2 547.6 671.3 549.3C674.4 550.9 674.8 552.8 675.5 553.5" fill="none" stroke="#a577cc" stroke-width="1.7"/>
<path d="M679.8 545C684 543.8 696.6 541.3 705 538C713.4 534.7 725.8 527.3 730 525.2" fill="none" stroke="#a577cc" stroke-width="1.7"/>
<path d="M662.8 582C666.6 579.1 674.3 569.4 685.5 564.9C696.7 560.4 714.1 558.1 730 555C745.9 551.9 767.3 549.5 781 546.4C794.7 543.3 802.3 537.4 812.3 536.5C822.2 535.6 826 541 840.7 540.8C855.4 540.6 885.6 535.6 900.3 535.1C915 534.6 921.1 536 928.7 537.9C936.3 539.8 941.5 543.1 945.7 546.4C950 549.7 952.8 555.9 954.2 557.8" fill="none" stroke="#a577cc" stroke-width="1.7"/>
<path d="M584.7 618.3C603.2 618.1 677 617.5 695.4 617.4" fill="none" stroke="#a678cc" stroke-width="1.6"/>
<path d="M608.5 679.4C626 676.2 695.8 663.4 713.3 660.2" fill="none" stroke="#a678cc" stroke-width="1.4"/>
<path d="M579.2 618.1C584.1 628.3 603.6 669.2 608.5 679.4" fill="none" stroke="#6d5a7c" stroke-width="1" stroke-dasharray="1 3"/>
<path d="M694.1 616.8C697.3 624 710.1 653 713.3 660.2" fill="none" stroke="#6d5a7c" stroke-width="1" stroke-dasharray="1 3"/>
<path d="M747 486.8C750.1 484 762.4 472.6 765.5 469.8" fill="none" stroke="#a577cc" stroke-width="1.7"/>
<path d="M730 522.3L770.8 484L780.9 477.3L793.5 498.3M789.3 517.6L791 509.2L797.7 504.1L817 517.6M825.4 518.4L815.3 529.3" fill="none" stroke="#a577cc" stroke-width="1.7" stroke-linejoin="round"/>
<path d="M752.7 539.3C753.7 537.4 756 530.6 758.4 528C760.8 525.4 762.6 522.3 766.9 523.7C771.1 525.1 781.1 534.4 783.9 536.5" fill="none" stroke="#a577cc" stroke-width="1.7"/>
<path d="M730 536.5C732.1 537.7 740.7 542.4 742.8 543.6" fill="none" stroke="#a577cc" stroke-width="1.7"/>
<path d="M809.5 560.6C810.2 561.3 812.3 566.1 813.7 564.9C815.1 563.7 816.6 557.5 818 553.5C819.4 549.5 821.6 542.9 822.3 540.8" fill="none" stroke="#a577cc" stroke-width="1.7"/>
<path d="M830.8 556.4C831.5 557.6 833.6 563 835 563.5C836.4 564 838.4 562.8 839.3 559.2C840.1 555.7 840 545 840.1 542.2" fill="none" stroke="#a577cc" stroke-width="1.7"/>
<path d="M700 612C709.2 613.9 736.3 620.3 755.5 623.1C774.7 625.9 795.8 630 815.2 628.8C834.6 627.6 853 622.9 871.9 616C890.8 609.1 912.9 596.6 928.7 587.6C944.6 578.6 960.6 566.3 967 562" fill="none" stroke="#a577cc" stroke-width="1.7"/>
<path d="M700 622C707.8 623.8 727.8 629.8 747 633C766.2 636.2 794.4 642 815.2 641.5C836 641 853 636.8 871.9 630.2C890.8 623.6 911.9 611.7 928.7 601.8C945.5 591.9 965.4 575.8 972.7 570.6" fill="none" stroke="#a577cc" stroke-width="1.7"/>
<path d="M513 596.8L524.5 586.3L536 590.1L544.7 584.3L547.6 592L557.2 593M513 633.3L527.4 628.5L536 638.1L545.6 625.6L561 627.6L561 614.1M504.3 596.8L508.2 601.6M512 610.3L516.8 604.5M500.5 616L512 618.9M519.1 617V622.8M555.3 601.6L562 606M560 614.1L570.6 608.4L578.3 606.4L583.1 609.3" fill="none" stroke="#a577cc" stroke-width="1.6" stroke-linejoin="round"/>
<path d="M897.7 475.7C902.8 475.4 919 473.2 928.4 474.1C937.8 475 944.1 477.1 953.9 481.3C963.7 485.5 979.4 494.5 987.1 499.2C994.8 503.9 995.2 505.1 999.9 509.4C1004.6 513.6 1011 519.6 1015.2 524.7C1019.5 529.8 1023 534.8 1025.4 540C1027.8 545.2 1028.8 550.5 1029.4 556C1030.1 561.5 1030 566.2 1029.3 573.3C1028.6 580.4 1026.9 591.2 1025.4 598.8C1023.9 606.4 1022.5 613 1020.3 619C1018.1 625 1015.4 630.3 1012 635C1008.6 639.7 1004.4 643.1 1000 647C995.6 650.9 993 653.6 985.6 658.3C978.2 663 965.3 669.6 955.5 675C945.7 680.4 936.5 685.6 927 690.6C917.5 695.6 908.2 700.5 898.7 704.8C889.2 709 880.7 712.6 870.3 716.1C859.9 719.6 845.7 723.7 836.2 725.5C826.7 727.3 821.2 727.1 813.5 727C805.8 726.9 798.1 725.6 789.9 724.6C781.7 723.6 768.6 721.6 764.3 721L764.3 721C763 721.7 760.1 723 756.7 725.4C753.3 727.8 751.1 732.6 743.9 735.6C736.7 738.6 726.9 740.3 713.3 743.3C699.7 746.3 680.9 749.5 662.2 753.5C643.5 757.5 613.1 764.8 600.9 767.5C588.7 770.2 592.3 770.1 589 770C585.7 769.9 583.3 768.7 581 767C578.7 765.3 576.2 761.2 575.3 760L575.3 760C571.9 753.4 558.4 727.1 555 720.5L555 720.5C553.1 720.7 548.7 721.8 543.5 721.8C538.3 721.8 531.3 721.8 523.7 720.4C516.1 719 505.1 716.4 498 713.3C490.9 710.2 486.2 706.7 481 702C475.8 697.3 471.7 692.1 467 685C462.3 677.9 456.7 668.3 452.7 659.3C448.7 650.3 445.2 638.7 442.8 631C440.4 623.3 439 618.4 438.5 613.1C438 607.8 438.6 605.1 440 599C441.4 592.9 443.5 583.3 447 576.2C450.5 569.1 455.5 562.5 461.2 556.4C466.9 550.2 474.4 544 481 539.3C487.6 534.6 495.3 530.8 501 528C506.7 525.2 512.8 523.2 515.2 522.3L515.2 522.3C512.1 512.9 500.7 478.8 496.7 466C492.7 453.2 493.6 454.8 491 445.7C488.4 436.6 483.6 420.6 481 411.7C478.4 402.8 477.2 399.4 475.5 392C473.8 384.6 471.8 373.3 471 367.5C470.2 361.7 469.9 360.2 470.5 357C471.1 353.8 473.9 349.9 474.6 348.5L474.6 348.5C473 342.8 467.5 322.7 465.1 314.5C462.7 306.3 461.3 302.7 460.4 299.3C459.5 295.9 459.6 294.9 459.5 294L459.5 294C459.8 293.1 459.8 290.8 461.4 288.9C463 286.9 464.6 285.4 468.9 282.3C473.2 279.2 480.8 274.2 487 270C493.2 265.8 500.3 260.9 506 257C511.7 253.1 517.7 248.7 521 246.5C524.3 244.3 523.7 244.6 525.7 243.8C527.8 243.1 530.5 242.1 533.3 242C536.1 241.9 539.9 242.5 542.7 243.5C545.5 244.5 547.6 246.3 550.3 248.2C553 250.1 556.1 252.6 559 254.8C561.9 257 566.1 260.4 567.5 261.5L567.5 261.5C570 260.4 575.3 257.4 582.5 254.9C589.7 252.4 601.2 248.6 610.8 246.4C620.4 244.2 632 242.6 640 241.8C648 241 651 240.4 658.9 241.8C666.8 243.2 674.7 246.6 687.3 250.5C699.9 254.4 720.4 260.3 734.6 265.3C748.8 270.3 763 276 772.5 280.4C782 284.8 786.7 288 791.4 291.8C796.1 295.6 798.4 299 800.8 303.1C803.2 307.2 804.5 310.4 805.6 316.4C806.7 322.4 806.7 332.1 807.5 339C808.3 345.9 809.2 349.2 810.3 358C811.4 366.8 812.6 381.7 814 392C815.4 402.3 817.1 413.4 818.5 420C819.9 426.6 819.4 426.4 822.4 431.5C825.4 436.6 831.5 444.9 836.4 450.7C841.3 456.4 846.4 461.2 851.7 466C857 470.8 865.5 477.3 868.3 479.6" fill="none" stroke="#2a78ff" stroke-width="3" stroke-linejoin="round" stroke-linecap="round"/>
<path d="M712 459L895 429" stroke="#da1e28" stroke-width="1.8"/><path d="M712 459L699 340" stroke="#196ef0" stroke-width="1.8"/><path d="M712 459L742 616" stroke="#24a249" stroke-width="1.8"/>
<polygon points="702.3,447.8 722,446.2 723.8,471 704,472.6" fill="#fff"/>
<polygon points="885.6,418 904.5,414.5 906.8,438.5 888.5,441.6" fill="#da1e28"/>
<polygon points="687,326.5 707,323 711,350.5 691,354" fill="#196ef0"/>
<polygon points="731.2,604.5 750.5,602.3 754.2,628.5 735,631" fill="#24a249"/>
</svg>
<div id="topline" class="abs"></div>
<div id="iconbox" class="abs">
<svg width="91" height="98" viewBox="0 0 91 98" style="position:absolute;left:0;top:0">
<path d="M16 -3H52.2V22.5Q52.2 30.4 60 30.4H82.1V87.5Q82.1 93.1 76.5 93.1H12.5Q6.9 93.1 6.9 87.5V6Q6.9 -3 16 -3Z" fill="#3f48cc"/>
<path d="M56.1 1.3L80.3 25.7H62Q56.1 25.7 56.1 20Z" fill="#3f48cc"/>
<rect x="-8" y="9.2" width="49.2" height="33.3" rx="6.5" fill="#fff"/>
<rect x="-8" y="13.2" width="45.4" height="25.1" rx="3" fill="#3f48cc"/>
<rect x="19.8" y="46.5" width="49.5" height="5.1" fill="#fff"/>
<rect x="19.8" y="61.4" width="49.5" height="5.1" fill="#fff"/>
<rect x="19.8" y="75.6" width="49.5" height="5.1" fill="#fff"/>
<text x="1.2" y="31" font-family="Liberation Sans, DejaVu Sans, sans-serif" font-weight="bold" font-size="13.6" fill="#fff" textLength="24" lengthAdjust="spacingAndGlyphs">STL</text>
</svg>
</div>
<div id="panel" class="abs">
<svg width="6" height="24" viewBox="0 0 6 24" style="position:absolute;left:-5px;top:19.5px"><path d="M5.5 0L0.5 4.5V19.5L5.5 24" fill="#fff" stroke="#c4c4c4" stroke-width="1"/></svg>
<div class="lbl" style="top:25px;color:#da1e28">X</div>
<div class="lbl" style="top:66px;color:#24a249">Y</div>
<div class="lbl" style="top:108px;color:#196ef0">Z</div>
<div class="fld" style="left:33px;top:16.1px;width:179px"><span class="v">114.8182</span><span class="u">mm</span></div>
<div class="fld" style="left:219.9px;top:16.1px;width:179.2px"><span class="v">100</span><span class="u">%</span></div>
<div class="fld" style="left:33px;top:57.2px;width:179px;border-bottom-width:1.5px"><span class="v">124.8182</span><span class="u">mm</span></div>
<div class="fld" style="left:219.9px;top:57.2px;width:179.2px;border-bottom-width:1.5px"><span class="v">100</span><span class="u">%</span></div>
<div class="fld" style="left:33px;top:99.3px;width:179px;border-bottom-width:1.5px"><span class="v">16</span><span class="u">mm</span></div>
<div class="fld" style="left:219.9px;top:99.3px;width:179.2px;border-bottom-width:1.5px"><span class="v">100</span><span class="u">%</span></div>
<div class="cb" style="top:151.5px"></div>
<div class="cbl" style="top:153px">Snap Scaling</div>
<div class="cb" style="top:188px"><svg width="19" height="19" viewBox="0 0 19 19" style="position:absolute;left:0;top:0"><path d="M5.9 9.7L8.3 12.1L12.9 7.5" fill="none" stroke="#14143c" stroke-width="2.8"/></svg></div>
<div class="cbl" style="top:190px">Uniform Scaling</div>
<svg width="30" height="30" viewBox="0 0 30 30" style="position:absolute;left:49px;top:167px"><path d="M11.5 7.2A9.6 9.6 0 1 1 5.7 16" fill="none" stroke="#14143c" stroke-width="2.6"/><path d="M15.6 0.9L8.6 6L15.6 10.9" fill="none" stroke="#14143c" stroke-width="2.6" stroke-linejoin="miter"/></svg>
</div>
<svg class="abs" width="14" height="9" viewBox="0 0 14 9" style="left:4px;top:689px"><path d="M1.2 7.5L7 1.8L12.8 7.5" fill="none" stroke="#8a8a8a" stroke-width="1.6"/></svg>
<div class="abs gtxt" style="left:36.5px;top:685px;font-size:14.4px;line-height:18px">Object list</div>
<svg class="abs" width="22" height="20" viewBox="0 0 22 20" style="left:4px;top:720px"><path d="M2 18.2H19" stroke="#6c6c6c" stroke-width="1.6" fill="none"/><path d="M4.5 14.5L6 10.5L16 2.6L18.8 5.6L8.6 13.6Z" fill="#6c6c6c"/></svg>
<div class="abs gtxt" style="left:44.3px;top:722px;font-size:13.3px;line-height:18px">STL1239</div>
<div class="abs gtxt" style="left:3.6px;top:754.5px;font-size:13.9px;line-height:18px">114.8 x 124.8 x 16.0 mm</div>
<svg class="abs" width="200" height="48" viewBox="0 785 200 48" style="left:0;top:785px"><g stroke="#6b6b6b" stroke-width="2.6" stroke-linejoin="round" fill="none"><path d="M19.7 794.6L30.8 800.9V813.4L19.7 819.7L8.6 813.4V800.9ZM8.6 800.9L19.7 807.2L30.8 800.9M19.7 807.2V819.7"/><polygon points="48.8,801.9 65.4,801.9 65.4,818.5 48.8,818.5" fill="#6b6b6b"/><polygon points="48.8,801.9 54.4,796.3 71.0,796.3 65.4,801.9" fill="none"/><polygon points="65.4,801.9 71.0,796.3 71.0,812.9 65.4,818.5" fill="none"/><polygon points="88.8,801.9 105.4,801.9 105.4,818.5 88.8,818.5" fill="none"/><polygon points="88.8,801.9 94.4,796.3 111.0,796.3 105.4,801.9" fill="#6b6b6b"/><polygon points="105.4,801.9 111.0,796.3 111.0,812.9 105.4,818.5" fill="none"/><polygon points="134.4,801.9 151.0,801.9 151.0,818.5 134.4,818.5" fill="none"/><polygon points="134.4,801.9 128.8,796.3 145.4,796.3 151.0,801.9" fill="none"/><polygon points="134.4,801.9 128.8,796.3 128.8,812.9 134.4,818.5" fill="#6b6b6b"/><polygon points="168.8,801.9 185.4,801.9 185.4,818.5 168.8,818.5" fill="none"/><polygon points="168.8,801.9 174.4,796.3 191.0,796.3 185.4,801.9" fill="none"/><polygon points="185.4,801.9 191.0,796.3 191.0,812.9 185.4,818.5" fill="#6b6b6b"/></g></svg>

</body></html>
